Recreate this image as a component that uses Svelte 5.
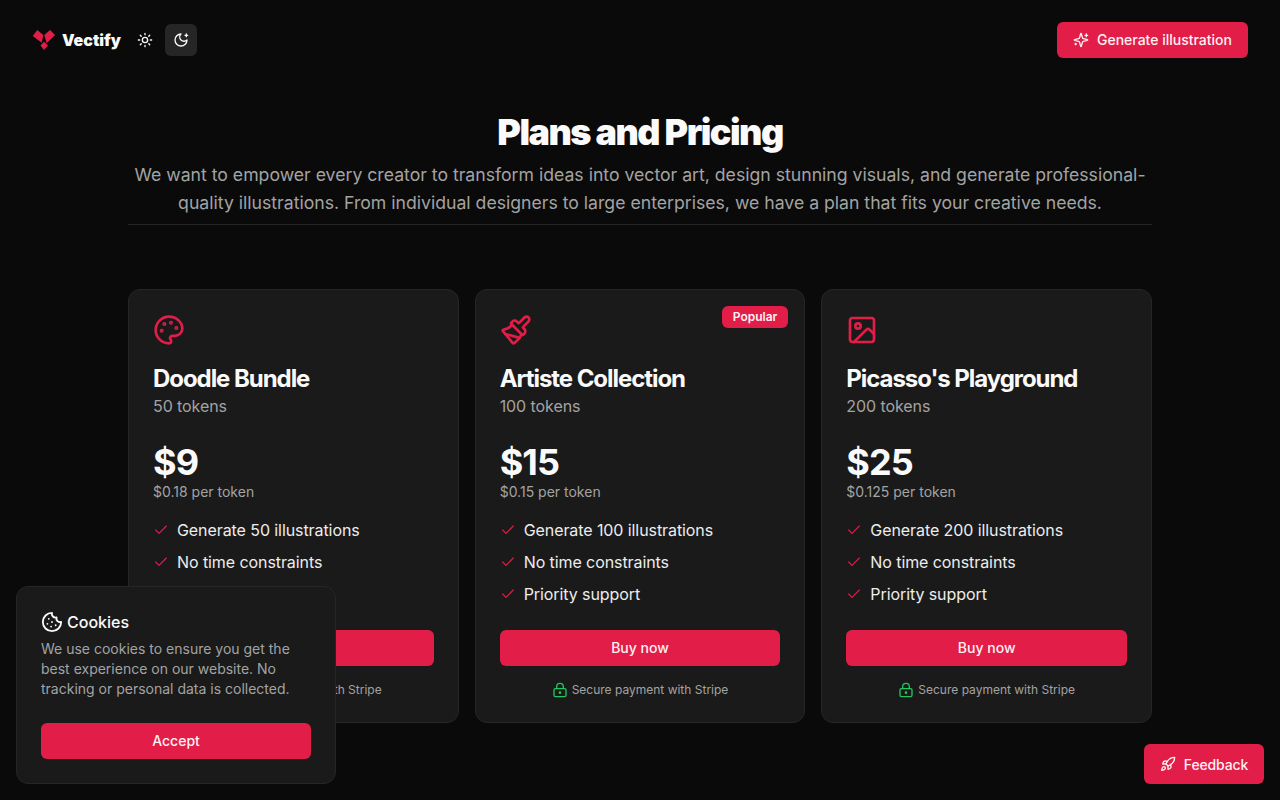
<script>
	const plans = [
		{
			name: "Doodle Bundle",
			tokens: 50,
			price: 9,
			perToken: "0.18",
			icon: "palette",
			features: ["Generate 50 illustrations", "No time constraints", "Priority support"],
		},
		{
			name: "Artiste Collection",
			tokens: 100,
			price: 15,
			perToken: "0.15",
			icon: "brush",
			popular: true,
			features: ["Generate 100 illustrations", "No time constraints", "Priority support"],
		},
		{
			name: "Picasso's Playground",
			tokens: 200,
			price: 25,
			perToken: "0.125",
			icon: "image",
			features: ["Generate 200 illustrations", "No time constraints", "Priority support"],
		},
	];
</script>

<div class="page">
	<header class="nav">
		<div class="nav-left">
			<a class="brand" href="#top">
				<svg class="logo" viewBox="0 0 24 22" width="24" height="22" fill="#e11d48">
					<polygon points="5.3,1 0.7,7 9.7,13.7 11.3,6" />
					<polygon points="18,1 23,6 14.7,14.3 12.3,6" />
					<polygon points="12,12.7 8.5,16.5 12,21 16,16.5" />
				</svg>
				<span>Vectify</span>
			</a>
			<div class="theme">
				<button type="button" class="theme-btn" aria-label="Light">
					<svg class="icon" width="16" height="16" viewBox="0 0 24 24">
						<circle cx="12" cy="12" r="4" />
						<path d="M12 2v2M12 20v2m-7.07-17.07 1.41 1.41m11.32 11.32 1.41 1.41M2 12h2M20 12h2M6.34 17.66l-1.41 1.41M19.07 4.93l-1.41 1.41" />
					</svg>
				</button>
				<button type="button" class="theme-btn active" aria-label="Dark">
					<svg class="icon" width="16" height="16" viewBox="0 0 24 24">
						<path d="M12 3a6 6 0 0 0 9 9 9 9 0 1 1-9-9Z" />
						<path d="M20 3v4M22 5h-4" />
					</svg>
				</button>
			</div>
		</div>
		<button type="button" class="primary generate">
			<svg class="icon" width="16" height="16" viewBox="0 0 24 24">
				<path d="M9.937 15.5A2 2 0 0 0 8.5 14.063l-6.135-1.582a.5.5 0 0 1 0-.962L8.5 9.936A2 2 0 0 0 9.937 8.5l1.582-6.135a.5.5 0 0 1 .963 0L14.063 8.5A2 2 0 0 0 15.5 9.937l6.135 1.581a.5.5 0 0 1 0 .964L15.5 14.063a2 2 0 0 0-1.437 1.437l-1.582 6.135a.5.5 0 0 1-.963 0z" />
				<path d="M20 3v4M22 5h-4M4 17v2M5 18H3" />
			</svg>
			Generate illustration
		</button>
	</header>

	<main class="content">
		<section class="intro">
			<h1>Plans and Pricing</h1>
			<p>We want to empower every creator to transform ideas into vector art, design stunning visuals, and generate professional-quality illustrations. From individual designers to large enterprises, we have a plan that fits your creative needs.</p>
		</section>

		<section class="cards">
			{#each plans as plan}
				<article class="card">
					{#if plan.popular}
						<span class="badge">Popular</span>
					{/if}
					<svg class="icon plan-icon" width="32" height="32" viewBox="0 0 24 24">
						{#if plan.icon === "palette"}
							<circle cx="13.5" cy="6.5" r=".5" fill="currentColor" />
							<circle cx="17.5" cy="10.5" r=".5" fill="currentColor" />
							<circle cx="8.5" cy="7.5" r=".5" fill="currentColor" />
							<circle cx="6.5" cy="12.5" r=".5" fill="currentColor" />
							<path d="M12 2C6.5 2 2 6.5 2 12s4.5 10 10 10c.926 0 1.648-.746 1.648-1.688 0-.437-.18-.835-.437-1.125-.29-.289-.438-.652-.438-1.125a1.64 1.64 0 0 1 1.668-1.668h1.996c3.051 0 5.555-2.503 5.555-5.554C21.965 6.012 17.461 2 12 2z" />
						{:else if plan.icon === "brush"}
							<path d="m14.622 17.897-10.68-2.913" />
							<path d="M18.376 2.622a1 1 0 1 1 3.002 3.002L17.36 9.643a.5.5 0 0 0 0 .707l.944.944a2.41 2.41 0 0 1 0 3.408l-.944.944a.5.5 0 0 1-.707 0L8.354 7.348a.5.5 0 0 1 0-.707l.944-.944a2.41 2.41 0 0 1 3.408 0l.944.944a.5.5 0 0 0 .707 0z" />
							<path d="M9 8c-1.804 2.71-3.97 3.46-6.583 3.948a.507.507 0 0 0-.302.819l7.32 8.883a1 1 0 0 0 1.185.204C12.735 20.405 16 16.792 16 15" />
						{:else}
							<rect x="3" y="3" width="18" height="18" rx="2" />
							<circle cx="9" cy="9" r="2" />
							<path d="m21 15-3.086-3.086a2 2 0 0 0-2.828 0L6 21" />
						{/if}
					</svg>
					<h2>{plan.name}</h2>
					<div class="tokens">{plan.tokens} tokens</div>
					<div class="price">${plan.price}</div>
					<div class="per-token">${plan.perToken} per token</div>
					<ul>
						{#each plan.features as feature}
							<li>
								<svg class="icon check" width="16" height="16" viewBox="0 0 24 24">
									<path d="M20 6 9 17l-5-5" />
								</svg>
								{feature}
							</li>
						{/each}
					</ul>
					<button type="button" class="primary buy">Buy now</button>
					<div class="secure">
						<svg class="icon lock" width="16" height="16" viewBox="0 0 24 24">
							<circle cx="12" cy="16" r="1" />
							<rect x="3" y="10" width="18" height="12" rx="2" />
							<path d="M7 10V7a5 5 0 0 1 10 0v3" />
						</svg>
						Secure payment with Stripe
					</div>
				</article>
			{/each}
		</section>
	</main>

	<aside class="cookies">
		<div class="cookies-title">
			<svg class="icon" width="22" height="22" viewBox="0 0 24 24">
				<path d="M12 2a10 10 0 1 0 10 10 4 4 0 0 1-5-5 4 4 0 0 1-5-5" />
				<path d="M8.5 8.5v.01M16 15.5v.01M12 12v.01M11 17v.01M7 14v.01" />
			</svg>
			Cookies
		</div>
		<p>We use cookies to ensure you get the best experience on our website. No tracking or personal data is collected.</p>
		<button type="button" class="primary accept">Accept</button>
	</aside>

	<button type="button" class="primary feedback">
		<svg class="icon" width="16" height="16" viewBox="0 0 24 24">
			<path d="M4.5 16.5c-1.5 1.26-2 5-2 5s3.74-.5 5-2c.71-.84.7-2.13-.09-2.91a2.18 2.18 0 0 0-2.91-.09z" />
			<path d="m12 15-3-3a22 22 0 0 1 2-3.95A12.88 12.88 0 0 1 22 2c0 2.72-.78 7.5-6 11a22.35 22.35 0 0 1-4 2z" />
			<path d="M9 12H4s.55-3.03 2-4c1.62-1.08 5 0 5 0" />
			<path d="M12 15v5s3.03-.55 4-2c1.08-1.62 0-5 0-5" />
		</svg>
		Feedback
	</button>
</div>

<style>
	:global(body) {
		background: #0a0a0a;
		color: #fafafa;
		font-family: Inter, "Liberation Sans", sans-serif;
	}
	.page {
		height: 800px;
		overflow: hidden;
	}
	.icon {
		fill: none;
		stroke: currentColor;
		stroke-width: 2;
		stroke-linecap: round;
		stroke-linejoin: round;
		flex-shrink: 0;
	}
	button {
		font-family: inherit;
		border: 0;
		cursor: pointer;
	}
	.primary {
		display: flex;
		align-items: center;
		justify-content: center;
		height: 36px;
		padding-bottom: 1px;
		background: #e11d48;
		color: #fff1f2;
		font-size: 14px;
		font-weight: 500;
		border-radius: 6px;
	}
	.nav {
		display: flex;
		align-items: center;
		justify-content: space-between;
		height: 80px;
		padding: 0 32px;
	}
	.nav-left {
		display: flex;
		align-items: center;
		gap: 8px;
	}
	.brand {
		display: flex;
		align-items: center;
		gap: 6px;
		color: #fafafa;
		text-decoration: none;
		font-size: 16px;
		font-weight: 900;
	}
	.theme {
		display: flex;
		gap: 4px;
	}
	.theme-btn {
		display: flex;
		align-items: center;
		justify-content: center;
		width: 32px;
		height: 32px;
		background: transparent;
		color: #fafafa;
		border-radius: 6px;
	}
	.theme-btn.active {
		background: #262626;
	}
	.generate {
		gap: 8px;
		padding: 0 16px 1px;
	}
	.content {
		width: 1024px;
		margin: 0 auto;
		padding-top: 32px;
	}
	.intro {
		text-align: center;
		padding-bottom: 7px;
		border-bottom: 1px solid #262626;
	}
	h1 {
		margin: 0 0 9px;
		font-size: 36px;
		line-height: 40px;
		font-weight: 900;
		letter-spacing: -0.043em;
	}
	.intro p {
		margin: 0;
		font-size: 17.65px;
		line-height: 28px;
		color: #a3a3a3;
	}
	.cards {
		display: grid;
		grid-template-columns: repeat(3, 1fr);
		gap: 16px;
		margin-top: 64px;
	}
	.card {
		position: relative;
		display: flex;
		flex-direction: column;
		padding: 24px;
		background: #1a1a1a;
		border: 1px solid #262626;
		border-radius: 12px;
	}
	.badge {
		position: absolute;
		top: 16px;
		right: 16px;
		padding: 0 11px;
		line-height: 22px;
		background: #e11d48;
		color: #fff1f2;
		font-size: 12px;
		font-weight: 600;
		border-radius: 6px;
	}
	.plan-icon {
		color: #e11d48;
	}
	h2 {
		margin: 17px 0 -1px;
		font-size: 24px;
		line-height: 32px;
		font-weight: 700;
		letter-spacing: -0.044em;
	}
	.tokens {
		font-size: 16px;
		line-height: 24px;
		letter-spacing: -0.005em;
		color: #a3a3a3;
	}
	.price {
		margin-top: 24px;
		font-size: 36px;
		line-height: 40px;
		font-weight: 700;
		letter-spacing: -0.025em;
	}
	.per-token {
		font-size: 14px;
		line-height: 20px;
		color: #a3a3a3;
	}
	ul {
		display: flex;
		flex-direction: column;
		gap: 8px;
		list-style: none;
		margin: 16px 0 0;
		padding: 0;
	}
	li {
		display: flex;
		align-items: center;
		gap: 8px;
		font-size: 16px;
		line-height: 24px;
		letter-spacing: -0.005em;
		color: #ededed;
	}
	.check {
		color: #e11d48;
		stroke-width: 1.75;
	}
	.buy {
		width: 100%;
		margin-top: 24px;
		padding-bottom: 2px;
	}
	.secure {
		display: flex;
		align-items: center;
		justify-content: center;
		gap: 4px;
		margin-top: 16px;
		font-size: 12px;
		line-height: 16px;
		color: #a3a3a3;
	}
	.lock {
		color: #22c55e;
	}
	.cookies {
		position: fixed;
		left: 16px;
		bottom: 16px;
		box-sizing: border-box;
		width: 320px;
		padding: 24px;
		background: #1a1a1a;
		border: 1px solid #262626;
		border-radius: 12px;
	}
	.cookies-title {
		display: flex;
		align-items: center;
		gap: 4px;
		font-size: 16px;
		line-height: 22px;
		font-weight: 500;
	}
	.cookies p {
		margin: 6px 0 0;
		font-size: 14px;
		line-height: 20px;
		color: #a3a3a3;
	}
	.accept {
		width: 100%;
		margin-top: 24px;
		padding-bottom: 2px;
	}
	.feedback {
		position: fixed;
		right: 16px;
		bottom: 16px;
		gap: 8px;
		height: 40px;
		width: 120px;
		letter-spacing: -0.01em;
	}
</style>
